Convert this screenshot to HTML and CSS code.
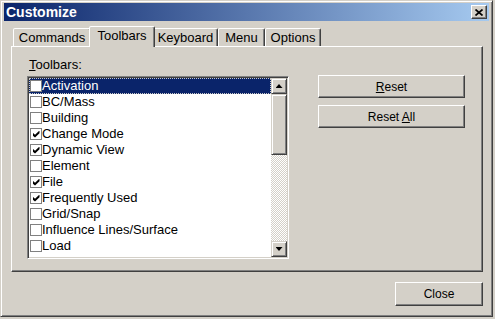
FILE: index.html
```html
<!DOCTYPE html>
<html lang="en">
<head>
    <meta charset="UTF-8">
    <title>Customize</title>
    <link rel="stylesheet" href="styles.css">
</head>
<body>
    <div class="window">
        <div class="titlebar">
            <span class="title">Customize</span>
            <button class="close-btn">
                <svg width="8" height="7" viewBox="0 0 8 7"><path d="M0.5 0.5L7.5 6.5M7.5 0.5L0.5 6.5" stroke="#000" stroke-width="1.7"/></svg>
            </button>
        </div>
        <div class="content">
            <div class="tabs">
                <div class="tab tab-commands">Commands</div>
                <div class="tab tab-toolbars active">Toolbars</div>
                <div class="tab tab-keyboard">Keyboard</div>
                <div class="tab tab-menu">Menu</div>
                <div class="tab tab-options">Options</div>
            </div>
            <div class="panel">
                <div class="list-col">
                    <div class="label"><u>T</u>oolbars:</div>
                    <div class="listbox">
                        <ul class="items">
                            <li class="item selected"><span class="cb"></span>Activation</li>
                            <li class="item"><span class="cb"></span>BC/Mass</li>
                            <li class="item"><span class="cb"></span>Building</li>
                            <li class="item"><span class="cb on"></span>Change Mode</li>
                            <li class="item"><span class="cb on"></span>Dynamic View</li>
                            <li class="item"><span class="cb"></span>Element</li>
                            <li class="item"><span class="cb on"></span>File</li>
                            <li class="item"><span class="cb on"></span>Frequently Used</li>
                            <li class="item"><span class="cb"></span>Grid/Snap</li>
                            <li class="item"><span class="cb"></span>Influence Lines/Surface</li>
                            <li class="item"><span class="cb"></span>Load</li>
                        </ul>
                        <div class="scrollbar">
                            <div class="sb-btn"><span class="arrow-up"></span></div>
                            <div class="sb-thumb"></div>
                            <div class="sb-track"></div>
                            <div class="sb-btn"><span class="arrow-down"></span></div>
                        </div>
                    </div>
                </div>
                <div class="btn-col">
                    <button class="btn"><u>R</u>eset</button>
                    <button class="btn">Reset <u>A</u>ll</button>
                </div>
            </div>
            <div class="footer">
                <button class="btn btn-close">Close</button>
            </div>
        </div>
    </div>
</body>
</html>
```

FILE: styles.css
```css
body {
    margin: 0;
    background-color: #d4d0c8;
    font-family: 'Liberation Sans', Arial, sans-serif;
    font-size: 13px;
    color: #000;
}
.window {
    box-sizing: border-box;
    width: 493px;
    height: 317px;
    padding: 2px 3px;
    background-color: #d4d0c8;
    border: 1px solid;
    border-color: #d4d0c8 #404040 #404040 #d4d0c8;
    box-shadow: inset 1px 1px #fff, inset -1px -1px #808080;
}
.titlebar {
    display: flex;
    align-items: center;
    justify-content: space-between;
    height: 18px;
    padding: 0 2px;
    background: linear-gradient(to right, #0a246a, #a6caf0);
}
.title {
    color: #fff;
    font-weight: bold;
    font-size: 14px;
}
.close-btn {
    box-sizing: border-box;
    display: flex;
    align-items: center;
    justify-content: center;
    width: 16px;
    height: 14px;
    padding: 0;
    background-color: #d4d0c8;
    border: 1px solid;
    border-color: #fff #404040 #404040 #fff;
    box-shadow: inset -1px -1px #808080;
}
.content {
    padding: 5px 6px 0 7px;
}
.tabs {
    display: flex;
    align-items: flex-end;
    height: 20px;
    padding-left: 2px;
}
.tab {
    box-sizing: border-box;
    height: 18px;
    padding-top: 1px;
    line-height: 16px;
    text-align: center;
    background-color: #d4d0c8;
    border: 1px solid;
    border-bottom: 0;
    border-color: #fff #404040 transparent #fff;
    border-radius: 2px 2px 0 0;
    box-shadow: inset -1px 0 #808080;
}
.tab.active {
    position: relative;
    z-index: 1;
    height: 21px;
    margin: 0 -2px -1px;
}
.tab-commands { width: 78px; }
.tab-toolbars { width: 66px; }
.tab-keyboard { width: 65px; }
.tab-menu { width: 47px; }
.tab-options { width: 56px; }
.panel {
    box-sizing: border-box;
    display: flex;
    height: 226px;
    padding: 10px 0 0 15px;
    border: 1px solid;
    border-color: #fff #404040 #404040 #fff;
    box-shadow: inset -1px -1px #808080;
}
.list-col {
    display: flex;
    flex-direction: column;
}
.label {
    padding-left: 2px;
    line-height: 15px;
    margin-bottom: 4px;
}
.listbox {
    box-sizing: border-box;
    display: flex;
    width: 262px;
    height: 183px;
    padding: 1px;
    background-color: #fff;
    border: 1px solid;
    border-color: #808080 #fff #fff #808080;
    box-shadow: inset 1px 1px #404040, inset -1px -1px #d4d0c8;
}
.items {
    flex: 1;
    list-style: none;
    margin: 0;
    padding: 0;
}
.item {
    display: flex;
    align-items: center;
    height: 16px;
    line-height: 16px;
    padding-left: 1px;
    white-space: nowrap;
}
.item.selected {
    background-color: #0a246a;
    color: #fff;
    outline: 1px dotted #c8c8c8;
    outline-offset: -1px;
}
.cb {
    box-sizing: border-box;
    display: flex;
    align-items: center;
    justify-content: center;
    width: 12px;
    height: 12px;
    background-color: #fff;
    border: 1px solid #808080;
}
.cb.on::after {
    content: "";
    width: 7px;
    height: 7px;
    background-color: #000;
    clip-path: polygon(0 30%, 36% 62%, 100% 0, 100% 40%, 36% 100%, 0 70%);
}
.scrollbar {
    display: flex;
    flex-direction: column;
    width: 16px;
    background: repeating-conic-gradient(#fff 0 25%, #d4d0c8 0 50%) 0 0 / 2px 2px;
}
.sb-btn, .sb-thumb {
    box-sizing: border-box;
    background-color: #d4d0c8;
    border: 1px solid;
    border-color: #d4d0c8 #404040 #404040 #d4d0c8;
    box-shadow: inset 1px 1px #fff, inset -1px -1px #808080;
}
.sb-btn {
    display: flex;
    align-items: center;
    justify-content: center;
    height: 16px;
}
.sb-thumb {
    height: 61px;
}
.sb-track {
    flex: 1;
}
.arrow-up, .arrow-down {
    width: 7px;
    height: 4px;
    background-color: #000;
}
.arrow-up {
    clip-path: polygon(50% 0, 100% 100%, 0 100%);
}
.arrow-down {
    clip-path: polygon(0 0, 100% 0, 50% 100%);
}
.btn-col {
    display: flex;
    flex-direction: column;
    gap: 7px;
    margin: 18px 0 0 29px;
}
.btn {
    box-sizing: border-box;
    width: 147px;
    height: 23px;
    padding: 0;
    font-family: 'Liberation Sans', Arial, sans-serif;
    font-size: 12px;
    color: #000;
    background-color: #d4d0c8;
    border: 1px solid;
    border-color: #fff #404040 #404040 #fff;
    box-shadow: inset -1px -1px #808080;
}
.footer {
    display: flex;
    justify-content: flex-end;
    padding-top: 10px;
}
.btn-close {
    width: 88px;
    height: 24px;
}
```
